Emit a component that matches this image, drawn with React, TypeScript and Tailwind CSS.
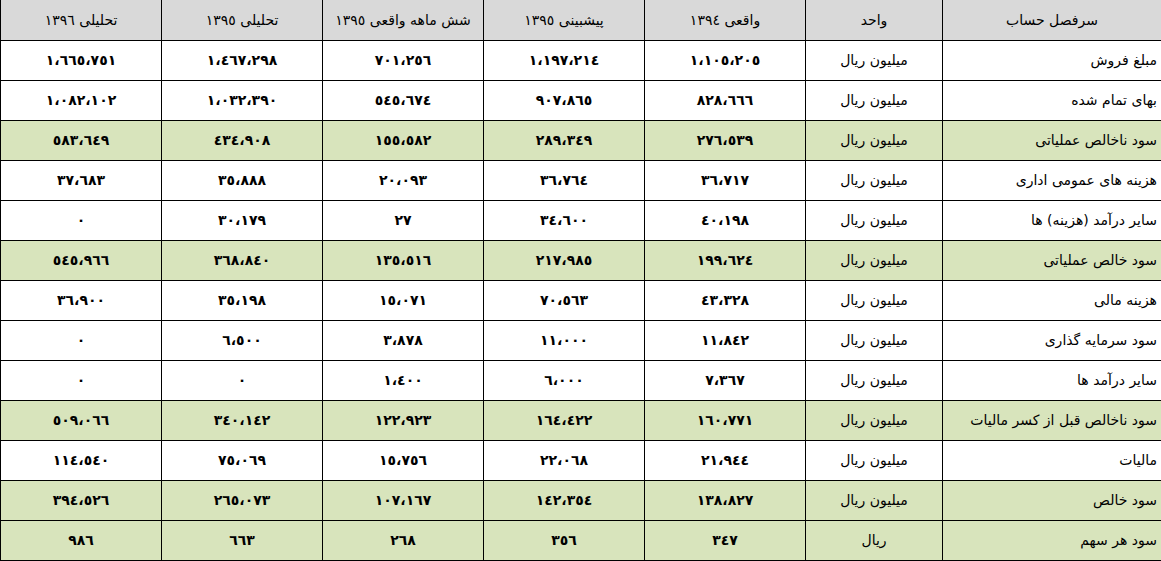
import React from "react";

type Row = { label: string; unit: string; vals: string[]; green?: boolean };

const rows: Row[] = [
  { label: "مبلغ فروش", unit: "میلیون ریال", vals: ["١،١٠٥،٢٠٥", "١،١٩٧،٢١٤", "٧٠١،٢٥٦", "١،٤٦٧،٢٩٨", "١،٦٦٥،٧٥١"] },
  { label: "بهای تمام شده", unit: "میلیون ریال", vals: ["٨٢٨،٦٦٦", "٩٠٧،٨٦٥", "٥٤٥،٦٧٤", "١،٠٣٢،٣٩٠", "١،٠٨٢،١٠٢"] },
  { label: "سود ناخالص عملیاتی", unit: "میلیون ریال", vals: ["٢٧٦،٥٣٩", "٢٨٩،٣٤٩", "١٥٥،٥٨٢", "٤٣٤،٩٠٨", "٥٨٣،٦٤٩"], green: true },
  { label: "هزینه های عمومی اداری", unit: "میلیون ریال", vals: ["٣٦،٧١٧", "٣٦،٧٦٤", "٢٠،٠٩٣", "٣٥،٨٨٨", "٣٧،٦٨٣"] },
  { label: "سایر درآمد (هزینه) ها", unit: "میلیون ریال", vals: ["٤٠،١٩٨", "٣٤،٦٠٠", "٢٧", "٣٠،١٧٩", "٠"] },
  { label: "سود خالص عملیاتی", unit: "میلیون ریال", vals: ["١٩٩،٦٢٤", "٢١٧،٩٨٥", "١٣٥،٥١٦", "٣٦٨،٨٤٠", "٥٤٥،٩٦٦"], green: true },
  { label: "هزینه مالی", unit: "میلیون ریال", vals: ["٤٣،٣٢٨", "٧٠،٥٦٣", "١٥،٠٧١", "٣٥،١٩٨", "٣٦،٩٠٠"] },
  { label: "سود سرمایه گذاری", unit: "میلیون ریال", vals: ["١١،٨٤٢", "١١،٠٠٠", "٣،٨٧٨", "٦،٥٠٠", "٠"] },
  { label: "سایر درآمد ها", unit: "میلیون ریال", vals: ["٧،٣٦٧", "٦،٠٠٠", "١،٤٠٠", "٠", "٠"] },
  { label: "سود ناخالص قبل از کسر مالیات", unit: "میلیون ریال", vals: ["١٦٠،٧٧١", "١٦٤،٤٢٢", "١٢٢،٩٢٣", "٣٤٠،١٤٢", "٥٠٩،٠٦٦"], green: true },
  { label: "مالیات", unit: "میلیون ریال", vals: ["٢١،٩٤٤", "٢٢،٠٦٨", "١٥،٧٥٦", "٧٥،٠٦٩", "١١٤،٥٤٠"] },
  { label: "سود خالص", unit: "میلیون ریال", vals: ["١٣٨،٨٢٧", "١٤٢،٣٥٤", "١٠٧،١٦٧", "٢٦٥،٠٧٣", "٣٩٤،٥٢٦"], green: true },
  { label: "سود هر سهم", unit: "ریال", vals: ["٣٤٧", "٣٥٦", "٢٦٨", "٦٦٣", "٩٨٦"], green: true },
];

const headers = ["سرفصل حساب", "واحد", "واقعی ١٣٩٤", "پیشبینی ١٣٩٥", "شش ماهه واقعی ١٣٩٥", "تحلیلی ١٣٩٥", "تحلیلی ١٣٩٦"];

const grid = "grid grid-cols-[161px_161px_161px_161px_161px_137px_219px]";
const font = { fontFamily: '"DejaVu Sans", sans-serif' };

export default function App() {
  return (
    <div className="w-[1161px] h-[561px] overflow-hidden bg-white text-black" style={font}>
      <div className={`${grid} h-[41px] bg-[#d9d9d9] border-b border-black`}>
        {[...headers].reverse().map((h, i) => (
          <div key={i} dir="rtl" className="border-l border-black flex items-center justify-center text-[14px]">
            {h}
          </div>
        ))}
      </div>
      {rows.map((r, ri) => (
        <div key={ri} className={`${grid} h-[40px] border-b border-black ${r.green ? "bg-[#d8e4bc]" : "bg-white"}`}>
          {[...r.vals].reverse().map((v, i) => (
            <div key={i} dir="rtl" className="border-l border-black flex items-center justify-center text-[14px] font-bold">
              {v}
            </div>
          ))}
          <div dir="rtl" className="border-l border-black flex items-center justify-center text-[14px]">
            {r.unit}
          </div>
          <div dir="rtl" className="border-l border-black flex items-center justify-start pr-1 text-[14px]">
            {r.label}
          </div>
        </div>
      ))}
    </div>
  );
}
